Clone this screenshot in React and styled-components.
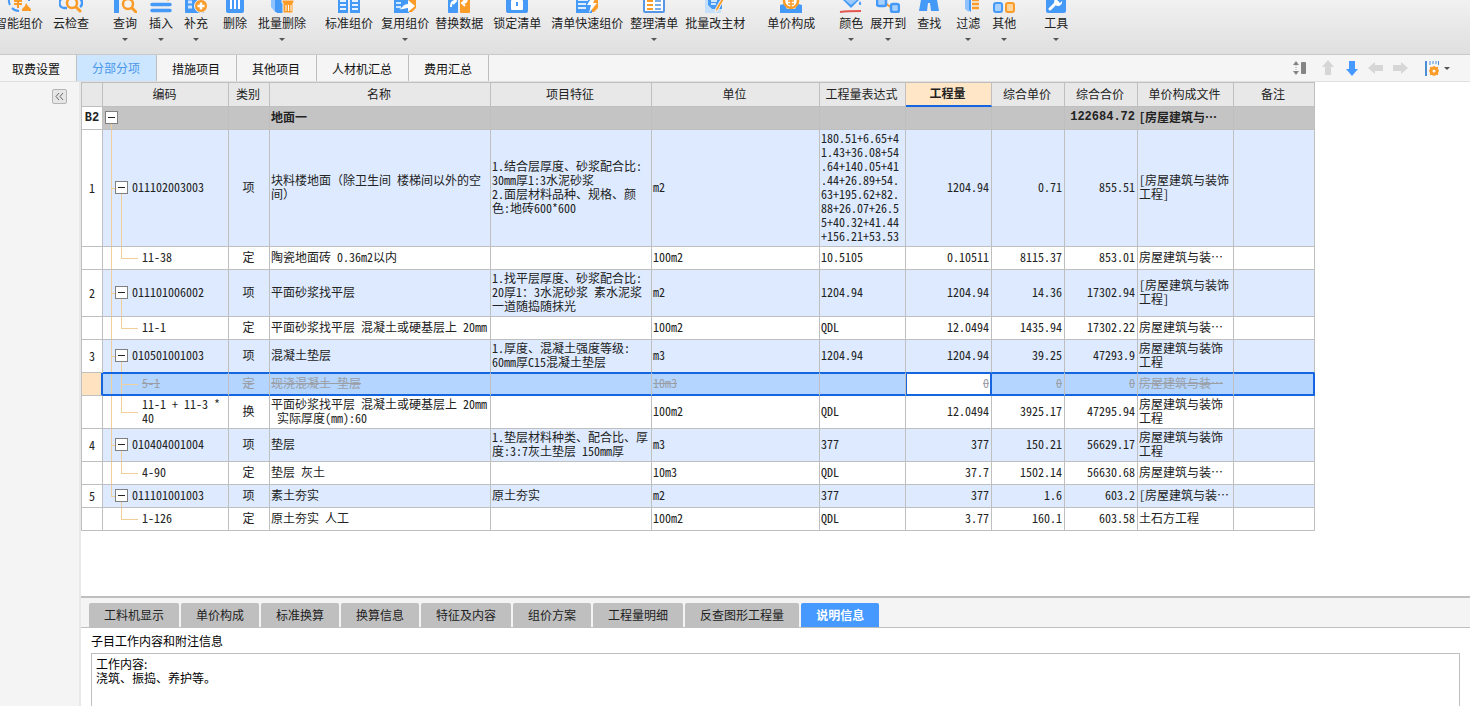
import React from "react";
import styled, { createGlobalStyle, css } from "styled-components";

const BLUE = "#4599f7";
const ORANGE = "#fb9b28";
const LINE = "#bfbfbf";
const SELECT = "#1565e0";
const TREE = "#f0cf98";

const GlobalStyle = createGlobalStyle`
  * {
    box-sizing: border-box;
  }
  body {
    margin: 0;
    overflow: hidden;
    background: #fff;
    color: #222;
    font: 12px/14px "Noto Sans CJK SC", sans-serif;
  }
  button, input, textarea {
    font: inherit;
    color: inherit;
    margin: 0;
    padding: 0;
    border: 0;
    background: none;
  }
`;

/* ---------- toolbar ---------- */

const icons = {
  smart: (
    <>
      <path d="M3 7a10 10 0 0 0 0 9M5 19a10 10 0 0 0 7 3M20 5a10 10 0 0 1 2 7" fill="none" stroke={BLUE} strokeWidth="2" />
      <path d="M7 5l4 5 4-5M11 10v9M7 12h8M7 15h8" fill="none" stroke={ORANGE} strokeWidth="2" />
      <path d="M19 14l2 3 3 3v2h-9v-2l3-3z" fill={ORANGE} />
    </>
  ),
  cloud: (
    <>
      <path d="M8 19H6a5 5 0 0 1-1-10 7 7 0 0 1 14 0 5 5 0 0 1 2 9" fill="none" stroke={BLUE} strokeWidth="2.5" />
      <circle cx="13" cy="14" r="5" fill="#f3f3f3" stroke={ORANGE} strokeWidth="2.5" />
      <path d="M17 18l4 4" stroke={ORANGE} strokeWidth="3" strokeLinecap="round" />
    </>
  ),
  query: (
    <>
      <path d="M1 3h20v4H6v17H1z" fill={BLUE} />
      <circle cx="15" cy="15" r="5" fill="#f3f3f3" stroke={ORANGE} strokeWidth="2.5" />
      <path d="M19 19l4 4" stroke={ORANGE} strokeWidth="3" strokeLinecap="round" />
    </>
  ),
  insert: (
    <>
      <path d="M18 11l3-4" stroke={ORANGE} strokeWidth="3" />
      <path d="M3 15.500h18M3 21.500h18" stroke={BLUE} strokeWidth="3.500" strokeLinecap="round" />
    </>
  ),
  supply: (
    <>
      <rect x="1" y="3" width="19" height="21" rx="1" fill={BLUE} />
      <path d="M4 13h4M4 18h4" stroke="#cfe6ff" strokeWidth="3" />
      <circle cx="17" cy="17" r="6.500" fill={ORANGE} stroke="#f3f3f3" />
      <path d="M17 13.500v7M13.500 17h7" stroke="#fff" strokeWidth="2.500" />
    </>
  ),
  remove: (
    <>
      <path d="M3 8h18v14a2 2 0 0 1-2 2H5a2 2 0 0 1-2-2z" fill={BLUE} />
      <path d="M8 10v10M12 10v10M16 10v10" stroke="#fff" strokeWidth="2" />
    </>
  ),
  batchRemove: (
    <>
      <path d="M1 3h14v20H5l-4-5z" fill="#8fc3ff" />
      <path d="M5 5h13v19H7l-2-2z" fill={BLUE} />
      <path d="M12 11h12v3h-1v10H13V14h-1z" fill={ORANGE} stroke="#f3f3f3" />
      <path d="M16 16v6M18.500 16v6M21 16v6" stroke="#fff" />
    </>
  ),
  standard: (
    <>
      <path d="M1 5h10v19H1zM13 5h10v19H13z" fill={BLUE} />
      <path d="M3 12h6M3 16h6M3 20h6M15 12h6M15 16h6M15 20h6" stroke="#e6f2ff" strokeWidth="2" />
    </>
  ),
  reuse: (
    <>
      <path d="M12 4h11v15l-4 4h-7z" fill={ORANGE} />
      <path d="M1 4h15v20H1z" fill={BLUE} />
      <path d="M3 14h5M3 18h5" stroke="#cfe6ff" strokeWidth="2" />
      <path d="M6 20c3 0 4-5 9-5v-4l7 6-7 6v-4c-4 0-5 2-9 1z" fill="#fff" />
    </>
  ),
  swap: (
    <>
      <rect x="1" y="4" width="10" height="20" rx="1" fill={BLUE} />
      <rect x="13" y="4" width="10" height="20" rx="1" fill={ORANGE} />
      <path d="M4 18c0-4 1-6 4-6M6 9l3 3-3 3M20 9c0 3-1 5-4 5M18 11l-3 3 3 3" fill="none" stroke="#fff" strokeWidth="2" />
    </>
  ),
  lock: (
    <>
      <rect x="1" y="4" width="22" height="20" rx="2" fill={BLUE} />
      <path d="M9 11V8h6v3" fill="none" stroke="#fff" strokeWidth="2" />
      <rect x="6" y="11" width="12" height="10" rx="1" fill="#fff" />
      <path d="M12 13v4" stroke={BLUE} strokeWidth="2" />
    </>
  ),
  quick: (
    <>
      <path d="M12 4h11v15l-4 4h-7z" fill={ORANGE} />
      <path d="M1 4h16v20H1z" fill={BLUE} />
      <path d="M3 11h10M3 15h8M3 19h8" stroke="#dcedff" strokeWidth="2" />
      <path d="M17 8l-5 8h4l-2 8 8-10h-4l3-6z" fill="#fff" />
    </>
  ),
  arrange: (
    <>
      <rect x="2" y="3" width="20" height="20" rx="1" fill="#fff" stroke="#5597e4" strokeWidth="2" />
      <path d="M5 12h6M5 16h6M5 20h6" stroke={ORANGE} strokeWidth="2" />
      <path d="M13 12h6M13 16h6M13 20h6" stroke="#7aaeea" strokeWidth="2" />
    </>
  ),
  material: (
    <>
      <path d="M2 4h16v20H2z" fill="#c5e0fd" />
      <path d="M5 4h14v16H9l-4-4z" fill={BLUE} />
      <path d="M8 12h6M8 15h5" stroke="#fff" strokeWidth="1.500" />
      <path d="M22 9l-7 12-3 2 1-4 7-12z" fill={ORANGE} stroke="#f3f3f3" />
    </>
  ),
  price: (
    <>
      <path d="M1 16l4-1 3 5h8l3-5 4 1v8H1z" fill={BLUE} />
      <circle cx="12" cy="12" r="7" fill="#fff" stroke={ORANGE} strokeWidth="2.500" />
      <path d="M8 6l4 5 4-5M12 11v7M9 12h6M9 15h6" fill="none" stroke={ORANGE} strokeWidth="1.500" />
    </>
  ),
  color: (
    <>
      <path d="M3 10l9-7 9 7-9 9z" fill={BLUE} />
      <path d="M6 11h12l-6 5z" fill="#9ccaff" />
      <path d="M21 12c2 3 1 4 0 4s-2-1 0-4z" fill={BLUE} />
      <path d="M1 23c7-1 15-1 21-1" stroke="#e4574f" strokeWidth="2" />
    </>
  ),
  expand: (
    <>
      <path d="M9 14l7 5" stroke={ORANGE} strokeWidth="2" />
      <rect x="1" y="8" width="9" height="9" rx="2" fill="#a9d1ff" stroke={BLUE} strokeWidth="2.500" />
      <rect x="15" y="15" width="8" height="8" rx="2" fill="#a9d1ff" stroke={BLUE} strokeWidth="2.500" />
    </>
  ),
  find: (
    <path d="M5 5h5l1 4h2l1-4h5l3 17h-8l-1-8h-2l-1 8H2z" fill={BLUE} />
  ),
  filter: (
    <>
      <path d="M2 4h13v19l-6-5v-7z" fill={BLUE} />
      <path d="M9 8v12l4 3V8z" fill="#8fc3ff" />
      <path d="M16 11h7M16 15h7M16 19h7" stroke={ORANGE} strokeWidth="2.500" />
    </>
  ),
  other: (
    <>
      <rect x="2" y="14" width="8" height="9" rx="2" fill="#a9d1ff" stroke={BLUE} strokeWidth="2" />
      <rect x="14" y="14" width="8" height="9" rx="2" fill="#ffd49d" stroke={ORANGE} strokeWidth="2" />
      <rect x="2" y="2" width="8" height="8" rx="2" fill="#a9d1ff" stroke={BLUE} strokeWidth="2" />
      <rect x="14" y="2" width="8" height="8" rx="2" fill="#a9d1ff" stroke={BLUE} strokeWidth="2" />
    </>
  ),
  tool: (
    <>
      <rect x="2" y="5" width="20" height="19" rx="2" fill={BLUE} />
      <path d="M6 20l7-7" stroke="#fff" strokeWidth="3" strokeLinecap="round" />
      <path d="M18 12a4 4 0 1 1-3-3l-2 2 3 3z" fill="#fff" />
    </>
  ),
};

const tools = [
  { icon: "smart", label: "智能组价", gap: 0 },
  { icon: "cloud", label: "云检查", gap: 10 },
  { icon: "query", label: "查询", gap: 24, menu: true },
  { icon: "insert", label: "插入", gap: 12, menu: true },
  { icon: "supply", label: "补充", gap: 11, menu: true },
  { icon: "remove", label: "删除", gap: 15 },
  { icon: "batchRemove", label: "批量删除", gap: 11, menu: true },
  { icon: "standard", label: "标准组价", gap: 19 },
  { icon: "reuse", label: "复用组价", gap: 8, menu: true },
  { icon: "swap", label: "替换数据", gap: 6 },
  { icon: "lock", label: "锁定清单", gap: 10 },
  { icon: "quick", label: "清单快速组价", gap: 10 },
  { icon: "arrange", label: "整理清单", gap: 7, menu: true },
  { icon: "material", label: "批量改主材", gap: 7 },
  { icon: "price", label: "单价构成", gap: 22 },
  { icon: "color", label: "颜色", gap: 24, menu: true },
  { icon: "expand", label: "展开到", gap: 7, menu: true },
  { icon: "find", label: "查找", gap: 11 },
  { icon: "filter", label: "过滤", gap: 15, menu: true },
  { icon: "other", label: "其他", gap: 12, menu: true },
  { icon: "tool", label: "工具", gap: 28, menu: true },
];

const Page = styled.div`
  display: flex;
  flex-direction: column;
  height: 100vh;
`;

const Toolbar = styled.header`
  display: flex;
  flex: none;
  height: 55px;
  overflow: hidden;
  background: linear-gradient(#f1f1f1, #dfdfdf);
  border-bottom: 1px solid #c9c9c9;
`;

const ToolList = styled.div`
  display: flex;
  align-items: flex-start;
  margin: -11px 0 0 -5px;
`;

const ToolButton = styled.button`
  display: flex;
  flex: none;
  flex-direction: column;
  align-items: center;
  margin-left: ${(p) => p.$gap}px;
  white-space: nowrap;

  svg {
    display: block;
    width: 24px;
    height: 24px;
    margin-bottom: 3px;
  }
`;

const Caret = styled.i`
  border: 3px solid transparent;
  border-top-color: #555;
  border-bottom: 0;
  margin-top: ${(p) => p.$top || 0}px;
`;

/* ---------- page tabs ---------- */

const TabBar = styled.nav`
  display: flex;
  flex: none;
  align-items: center;
  justify-content: space-between;
  height: 27px;
  background: #f5f5f5;
  border-bottom: 1px solid #e0e0e0;
`;

const Tabs = styled.div`
  display: flex;
  align-self: stretch;
`;

const PageTab = styled.button`
  padding: 2px 16px 0 15px;
  border-right: 1px solid ${LINE};
  color: #111;
  white-space: nowrap;

  &:first-child {
    padding-left: 12px;
  }

  ${(p) =>
    p.$active &&
    css`
      padding-top: 0;
      background: #cce6ff;
      color: #4a97ec;
    `}
`;

const NavTools = styled.div`
  display: flex;
  align-items: center;
  gap: 8px;
  padding-right: 20px;
`;

const NavButton = styled.button`
  display: flex;
  align-items: center;
  gap: 4px;
  margin-left: ${(p) => p.$gap || 0}px;

  svg {
    display: block;
  }
`;

/* ---------- body ---------- */

const Body = styled.div`
  display: flex;
  flex: 1;
  min-height: 0;
`;

const SidePanel = styled.aside`
  display: flex;
  flex: 0 0 81px;
  align-items: flex-start;
  justify-content: flex-end;
  padding: 7px 12px 0 0;
  background: #f4f4f4;
  border-right: 2px solid #e8e8e8;
`;

const CollapseButton = styled.button`
  display: grid;
  place-items: center;
  width: 15px;
  height: 15px;
  background: #e6e6e6;
  border: 1px solid #b5b5b5;
  border-radius: 2px;
`;

const Content = styled.main`
  display: flex;
  flex: 1;
  flex-direction: column;
  min-width: 0;
`;

const GridArea = styled.div`
  flex: 1;
  min-height: 0;
  overflow: hidden;
`;

const Grid = styled.table`
  width: 1234px;
  table-layout: fixed;
  border-collapse: separate;
  border-spacing: 0;
  border: solid ${LINE};
  border-width: 1px 0 0 1px;
  font-family: "Noto Sans Mono CJK SC", "Noto Sans CJK SC", monospace;
`;

const HeadCell = styled.th`
  height: 24px;
  padding: 0 2px 2px 0;
  background: ${(p) => (p.$active ? "#ffe6c7" : "#e8e8e8")};
  border: solid ${LINE};
  border-width: 0 1px 1px 0;
  font-weight: ${(p) => (p.$active ? 700 : 400)};
  ${(p) => p.$active && `border-bottom: 2px solid ${SELECT};`}
`;

const Cell = styled.td`
  height: 23px;
  padding: 1px 2px 3px 1px;
  border: solid ${LINE};
  border-width: 0 1px 1px 0;
  text-align: ${(p) => p.$align || "left"};
  vertical-align: middle;
  white-space: pre;
  overflow: hidden;
`;

const IndexCell = styled(Cell)`
  padding: 2px 0;
  background: #fff;
  text-align: center;
`;

const treeLine = (x, y, w, h) =>
  `linear-gradient(${TREE}, ${TREE}) ${x} ${y} / ${w} ${h} no-repeat`;

const treeLines = {
  root: [treeLine("8px", "100%", "1px", "50%")],
  item: [
    treeLine("8px", "0", "1px", "100%"),
    treeLine("8px", "50%", "4px", "1px"),
    treeLine("18px", "100%", "1px", "50%"),
  ],
  lastItem: [
    treeLine("8px", "0", "1px", "50%"),
    treeLine("8px", "50%", "4px", "1px"),
    treeLine("18px", "100%", "1px", "50%"),
  ],
  midSub: [
    treeLine("8px", "0", "1px", "100%"),
    treeLine("18px", "0", "1px", "100%"),
    treeLine("18px", "50%", "17px", "1px"),
  ],
  sub: [
    treeLine("8px", "0", "1px", "100%"),
    treeLine("18px", "0", "1px", "50%"),
    treeLine("18px", "50%", "17px", "1px"),
  ],
  lastSub: [
    treeLine("18px", "0", "1px", "50%"),
    treeLine("18px", "50%", "17px", "1px"),
  ],
};

const indents = { root: 2, item: 12, lastItem: 12, midSub: 39, sub: 39, lastSub: 39 };

const TreeCell = styled(Cell)`
  padding-left: ${(p) => indents[p.$node]}px;
  background: ${(p) => treeLines[p.$node].join(", ")};
`;

const TreeContent = styled.div`
  display: flex;
  align-items: center;
  gap: 4px;
`;

const Toggle = styled.button`
  flex: none;
  width: 13px;
  height: 13px;
  padding: 0 2px;
  background: #fff;
  border: 1px solid #808080;

  &::before {
    content: "";
    display: block;
    height: 1px;
    background: #222;
  }
`;

const Row = styled.tr`
  background: ${(p) =>
    ({ root: "#c4c4c4", item: "#ddeaff", lastItem: "#ddeaff" }[p.$node] || "#fff")};
  font-weight: ${(p) => (p.$node === "root" ? 700 : 400)};

  ${(p) =>
    p.$node === "root" &&
    css`
      td:first-child,
      td:nth-child(10) {
        font-family: "Liberation Mono", monospace;
      }
    `}

  &[aria-selected="true"] {
    background: #b3d5ff;
    color: #9b9fa5;
    text-decoration: line-through;
  }

  &[aria-selected="true"] td:not(:first-child) {
    border-bottom-color: ${SELECT};
    box-shadow: inset 0 1px ${SELECT}, inset 0 -1px ${SELECT};
  }

  &[aria-selected="true"] td:first-child {
    background: #ffe3c0;
    border-right: 2px solid ${SELECT};
  }

  &[aria-selected="true"] td:last-child {
    border-right: 2px solid ${SELECT};
  }

  &[aria-selected="true"] td:not(:first-child):has(input) {
    background: #fff;
    border-right-color: ${SELECT};
    box-shadow: inset 1px 1px ${SELECT}, inset -1px -1px ${SELECT};
  }

  &:has(+ tr[aria-selected="true"]) td:not(:first-child) {
    border-bottom-color: ${SELECT};
  }
`;

const CellInput = styled.input`
  display: block;
  width: 100%;
  height: 14px;
  outline: 0;
  text-align: right;
  text-decoration: line-through;
`;

const columns = [
  { label: "", width: 21 },
  { label: "编码", width: 126 },
  { label: "类别", width: 41 },
  { label: "名称", width: 221 },
  { label: "项目特征", width: 161 },
  { label: "单位", width: 168 },
  { label: "工程量表达式", width: 86 },
  { label: "工程量", width: 86, active: true },
  { label: "综合单价", width: 73 },
  { label: "综合合价", width: 73 },
  { label: "单价构成文件", width: 96 },
  { label: "备注", width: 81 },
];

// node, no, code, kind, name, feature, unit, expression, amount, price, total, file
const rows = [
  ["root", "B2", "", "", "地面一", "", "", "", "", "", "122684.72", "[房屋建筑与…"],
  [
    "item", "1", "011102003003", "项",
    "块料楼地面（除卫生间 楼梯间以外的空\n间）",
    "1.结合层厚度、砂浆配合比:\n30mm厚1:3水泥砂浆\n2.面层材料品种、规格、颜\n色:地砖600*600",
    "m2",
    "180.51+6.65+4\n1.43+36.08+54\n.64+140.05+41\n.44+26.89+54.\n63+195.62+82.\n88+26.07+26.5\n5+40.32+41.44\n+156.21+53.53",
    "1204.94", "0.71", "855.51", "[房屋建筑与装饰\n工程]",
  ],
  ["sub", "", "11-38", "定", "陶瓷地面砖 0.36m2以内", "", "100m2", "10.5105", "0.10511", "8115.37", "853.01", "房屋建筑与装…"],
  [
    "item", "2", "011101006002", "项", "平面砂浆找平层",
    "1.找平层厚度、砂浆配合比:\n20厚1：3水泥砂浆 素水泥浆\n一道随捣随抹光",
    "m2", "1204.94", "1204.94", "14.36", "17302.94", "[房屋建筑与装饰\n工程]",
  ],
  ["sub", "", "11-1", "定", "平面砂浆找平层 混凝土或硬基层上 20mm", "", "100m2", "QDL", "12.0494", "1435.94", "17302.22", "房屋建筑与装…"],
  ["item", "3", "010501001003", "项", "混凝土垫层", "1.厚度、混凝土强度等级:\n60mm厚C15混凝土垫层", "m3", "1204.94", "1204.94", "39.25", "47293.9", "房屋建筑与装饰\n工程"],
  ["midSub", "", "5-1", "定", "现浇混凝土 垫层", "", "10m3", "", "0", "0", "0", "房屋建筑与装…"],
  ["sub", "", "11-1 + 11-3 *\n40", "换", "平面砂浆找平层 混凝土或硬基层上 20mm\n 实际厚度(mm):60", "", "100m2", "QDL", "12.0494", "3925.17", "47295.94", "房屋建筑与装饰\n工程"],
  ["item", "4", "010404001004", "项", "垫层", "1.垫层材料种类、配合比、厚\n度:3:7灰土垫层 150mm厚", "m3", "377", "377", "150.21", "56629.17", "房屋建筑与装饰\n工程"],
  ["sub", "", "4-90", "定", "垫层 灰土", "", "10m3", "QDL", "37.7", "1502.14", "56630.68", "房屋建筑与装…"],
  ["lastItem", "5", "011101001003", "项", "素土夯实", "原土夯实", "m2", "377", "377", "1.6", "603.2", "[房屋建筑与装…"],
  ["lastSub", "", "1-126", "定", "原土夯实 人工", "", "100m2", "QDL", "3.77", "160.1", "603.58", "土石方工程"],
];

/* ---------- detail panel ---------- */

const Detail = styled.section`
  display: flex;
  flex: 0 0 110px;
  flex-direction: column;
  border-top: 2px solid ${LINE};
`;

const DetailTabs = styled.div`
  display: flex;
  flex: none;
  gap: 2px;
  padding: 5px 8px 0;
  background: #f4f4f4;
  border-bottom: 1px solid ${LINE};
`;

const DetailTab = styled.button`
  height: 24px;
  padding: 0 15px;
  border-radius: 2px 2px 0 0;
  background: ${(p) => (p.$active ? "#4599ff" : LINE)};
  color: ${(p) => (p.$active ? "#fff" : "#222")};
  font-weight: ${(p) => (p.$active ? 700 : 400)};
  white-space: nowrap;
`;

const NoteLabel = styled.label`
  flex: none;
  padding: 6px 10px 5px;
  color: #000;
`;

const Note = styled.textarea`
  flex: 1;
  margin: 0 10px;
  padding: 3px 4px;
  border: solid ${LINE};
  border-width: 1px 1px 0;
  color: #000;
  outline: 0;
  resize: none;
  overflow: hidden;
`;

const pageTabs = ["取费设置", "分部分项", "措施项目", "其他项目", "人材机汇总", "费用汇总"];

const detailTabs = [
  "工料机显示",
  "单价构成",
  "标准换算",
  "换算信息",
  "特征及内容",
  "组价方案",
  "工程量明细",
  "反查图形工程量",
  "说明信息",
];

const Arrow = ({ turn, color }) => (
  <svg width="16" height="16" viewBox="0 0 16 16">
    <path d="M8 0l6 7h-3v8H5V7H2z" fill={color} transform={`rotate(${turn} 8 8)`} />
  </svg>
);

const GridRow = ({ row }) => {
  const [node, no, code, kind, name, feature, unit, expr, amount, price, total, file] = row;
  const selected = node === "midSub";
  const hasToggle = node === "root" || node === "item" || node === "lastItem";
  return (
    <Row $node={node} aria-selected={selected}>
      <IndexCell>{no}</IndexCell>
      <TreeCell $node={node}>
        <TreeContent>
          {hasToggle && <Toggle aria-label="折叠" />}
          {code}
        </TreeContent>
      </TreeCell>
      <Cell $align="center">{kind}</Cell>
      <Cell>{name}</Cell>
      <Cell>{feature}</Cell>
      <Cell>{unit}</Cell>
      <Cell>{expr}</Cell>
      <Cell $align="right">
        {selected ? <CellInput aria-label="工程量" defaultValue={amount} /> : amount}
      </Cell>
      <Cell $align="right">{price}</Cell>
      <Cell $align="right">{total}</Cell>
      <Cell>{file}</Cell>
      <Cell />
    </Row>
  );
};

const App = () => {
  return (
    <Page>
      <GlobalStyle />
      <Toolbar>
        <ToolList>
          {tools.map((t) => (
            <ToolButton key={t.label} $gap={t.gap}>
              <svg viewBox="0 0 24 24">{icons[t.icon]}</svg>
              {t.label}
              {t.menu && <Caret $top={8} />}
            </ToolButton>
          ))}
        </ToolList>
      </Toolbar>

      <TabBar>
        <Tabs>
          {pageTabs.map((label) => (
            <PageTab key={label} $active={label === "分部分项"}>
              {label}
            </PageTab>
          ))}
        </Tabs>
        <NavTools>
          <NavButton aria-label="行高">
            <svg width="16" height="16" viewBox="0 0 16 16">
              <path d="M4 1l3 4H1zM4 15l3-4H1z" fill="#858585" />
              <path d="M4 5v6" stroke="#aaa" strokeDasharray="1 1" />
              <rect x="9" y="2" width="5" height="12" rx="1" fill="#858585" />
            </svg>
          </NavButton>
          <NavButton aria-label="上移" $gap={4}>
            <Arrow turn={0} color="#d6d6d6" />
          </NavButton>
          <NavButton aria-label="下移">
            <Arrow turn={180} color="#4599ff" />
          </NavButton>
          <NavButton aria-label="左移">
            <Arrow turn={270} color="#d6d6d6" />
          </NavButton>
          <NavButton aria-label="右移">
            <Arrow turn={90} color="#d6d6d6" />
          </NavButton>
          <NavButton aria-label="列设置" $gap={8}>
            <svg width="16" height="16" viewBox="0 0 16 16">
              <path d="M2 1v15" stroke="#4a8fd6" strokeWidth="2" />
              <path d="M6 1v4M9 1v3M12 1v3M14.500 1v4" stroke="#4a8fd6" />
              <path
                d="M10 6l2 1h2l0 2 1 2-1 2 0 2h-2l-2 1-2-1H6v-2l-1-2 1-2V7h2z"
                fill={ORANGE}
              />
              <circle cx="10" cy="11" r="1.500" fill="#fff" />
            </svg>
            <Caret />
          </NavButton>
        </NavTools>
      </TabBar>

      <Body>
        <SidePanel>
          <CollapseButton aria-label="收起">
            <svg width="9" height="9" viewBox="0 0 9 9">
              <path d="M4 1L1 4.500 4 8M8 1L5 4.500 8 8" fill="none" stroke="#666" />
            </svg>
          </CollapseButton>
        </SidePanel>
        <Content>
          <GridArea>
            <Grid>
              <colgroup>
                {columns.map((c, i) => (
                  <col key={i} width={c.width} />
                ))}
              </colgroup>
              <thead>
                <tr>
                  {columns.map((c, i) => (
                    <HeadCell key={i} $active={c.active}>
                      {c.label}
                    </HeadCell>
                  ))}
                </tr>
              </thead>
              <tbody>
                {rows.map((row, i) => (
                  <GridRow key={i} row={row} />
                ))}
              </tbody>
            </Grid>
          </GridArea>

          <Detail>
            <DetailTabs>
              {detailTabs.map((label) => (
                <DetailTab key={label} $active={label === "说明信息"}>
                  {label}
                </DetailTab>
              ))}
            </DetailTabs>
            <NoteLabel htmlFor="note">子目工作内容和附注信息</NoteLabel>
            <Note id="note" defaultValue={"工作内容:\n浇筑、振捣、养护等。"} />
          </Detail>
        </Content>
      </Body>
    </Page>
  );
};

export default App;
